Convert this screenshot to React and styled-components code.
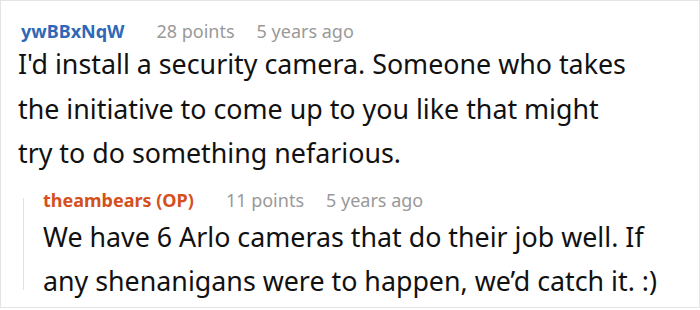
import React from "react";
import styled, { createGlobalStyle } from "styled-components";

const GlobalStyle = createGlobalStyle`
  html, body {
    margin: 0;
    padding: 0;
    background: #fff;
  }
  body {
    font-family: "Noto Sans", "Open Sans", sans-serif;
  }
`;

const Frame = styled.div`
  width: 700px;
  height: 308px;
  box-sizing: border-box;
  border: 1px solid #e4e4e4;
  padding: 19px 0 0 17px;
  overflow: hidden;
`;

const Meta = styled.div`
  display: flex;
  align-items: baseline;
  font-size: 18px;
  line-height: 22px;
  padding-left: ${(p) => p.indent || 0}px;
  margin-bottom: ${(p) => p.space || 0}px;
`;

const Author = styled.span`
  font-weight: 700;
  color: ${(p) => p.color};
  margin-right: 32px;
`;

const Muted = styled.span`
  color: #999;
  margin-right: 22px;
`;

const Body = styled.p`
  margin: 0;
  font-size: 26.8px;
  line-height: 44.5px;
  color: #111;
  white-space: nowrap;
`;

const Reply = styled.div`
  position: relative;
  margin: 13px 0 0 5px;
  padding-left: 20px;

  &::before {
    content: "";
    position: absolute;
    left: 0;
    top: 9px;
    height: 92px;
    border-left: 1px solid #e2e2e2;
  }
`;

export default function App() {
  return (
    <>
      <GlobalStyle />
      <Frame>
        <Meta indent={3}>
          <Author color="#2f68b6">ywBBxNqW</Author>
          <Muted>28 points</Muted>
          <Muted>5 years ago</Muted>
        </Meta>
        <Body>
          I'd install a security camera. Someone who takes
          <br />
          the initiative to come up to you like that might
          <br />
          try to do something nefarious.
        </Body>
        <Reply>
          <Meta space={4}>
            <Author color="#d4501c">theambears (OP)</Author>
            <Muted>11 points</Muted>
            <Muted>5 years ago</Muted>
          </Meta>
          <Body>
            We have 6 Arlo cameras that do their job well. If
            <br />
            any shenanigans were to happen, we’d catch it. :)
          </Body>
        </Reply>
      </Frame>
    </>
  );
}
